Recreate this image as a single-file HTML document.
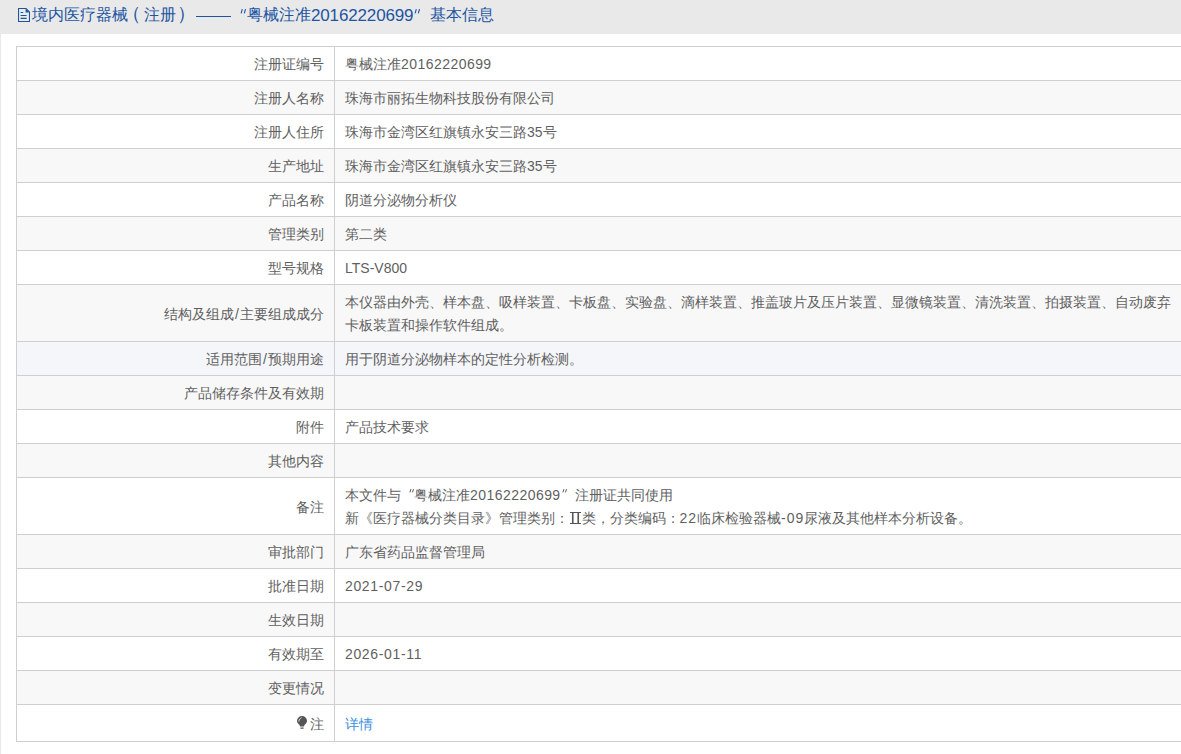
<!DOCTYPE html>
<html><head><meta charset="utf-8">
<style>
html,body{margin:0;padding:0;}
body{width:1181px;height:754px;overflow:hidden;background:#e9e9e9;font-family:"Liberation Sans",sans-serif;font-size:14px;color:#555;position:relative;}
.hd{position:absolute;left:0;top:0;width:1181px;height:34px;background:#e9e9e9;}
.hd .t{position:absolute;left:31px;top:4px;font-size:16px;line-height:22px;color:#1d55a2;white-space:nowrap;}
.ico{position:absolute;left:18px;top:8px;}
.panel{position:absolute;left:1px;top:34px;width:1200px;height:730px;background:#fff;}
.hl{position:absolute;left:0;top:33px;width:1181px;height:1px;background:#e6e8ec;}
table{position:absolute;left:16px;top:46px;border-collapse:collapse;width:1200px;table-layout:fixed;}
td{border:1px solid #cfcfcf;height:32px;padding:1px 0 0 0;font-size:14px;line-height:23px;color:#5f5f5f;white-space:nowrap;}
td.k{width:307px;text-align:right;padding-right:10px;}
td.v{padding-left:10px;}
tr.g td{background:#f8f8f8;}
tr.h td{background:#f5f6f9;}
.n{letter-spacing:0.45px;}
.dt{letter-spacing:0.65px;}
.sl{margin:0 1.2px;}
.r2{display:inline-block;width:12.5px;height:14px;position:relative;vertical-align:-1px;}
.r2 svg{position:absolute;left:1px;top:2px;}
.bulb{vertical-align:0px;margin-right:3px;}
.qo{display:inline-block;width:13px;height:10px;position:relative;}
.qo svg{position:absolute;left:8px;top:-1px;}
.qc{display:inline-block;width:14px;height:10px;position:relative;}
.qc svg{position:absolute;left:1.5px;top:-1px;}
tr.d td{height:54px;padding-top:2px;}
tr.l td{height:33px;padding-top:3px;}
</style></head><body>
<div class="hd">
<svg class="ico" width="12" height="14" viewBox="0 0 12 14"><path d="M0.5 0.5H8L11.5 4V13.5H0.5Z" fill="none" stroke="#1d55a2" stroke-width="1.1"/><path d="M7.6 0.8V4.4H11.2Z" fill="#1d55a2"/><path d="M2.6 4.5H5.2M2.6 7.5H8.6M2.6 10.4H8.6" stroke="#1d55a2" stroke-width="1.1"/></svg>
<span class="t" style="left:32px">境内医疗器械</span>
<span class="t" style="left:122px;top:3px;font-size:19px">（</span>
<span class="t" style="left:144px">注册</span>
<span class="t" style="left:177px;top:3px;font-size:19px">）</span>
<div style="position:absolute;left:196px;top:16px;width:35px;height:1.3px;background:#1d55a2"></div>
<svg style="position:absolute;left:240px;top:9px" width="6" height="4.5" viewBox="0 0 6 4.5"><path d="M2.3 0.2L1.1 4.3M5.5 0.2L4.3 4.3" stroke="#1d55a2" stroke-width="1.1"/></svg>
<span class="t" style="left:247px">粤械注准</span>
<span class="t" style="left:311px;top:5px;font-size:17px;letter-spacing:-0.15px">20162220699</span>
<svg style="position:absolute;left:414px;top:9px" width="6" height="4.5" viewBox="0 0 6 4.5"><path d="M2.3 0.2L1.1 4.3M5.5 0.2L4.3 4.3" stroke="#1d55a2" stroke-width="1.1"/></svg>
<span class="t" style="left:430px">基本信息</span>
</div>
<div class="hl"></div><div class="panel"></div>
<table>
<tr><td class="k">注册证编号</td><td class="v">粤械注准<span class="n">20162220699</span></td></tr>
<tr class="g"><td class="k">注册人名称</td><td class="v">珠海市丽拓生物科技股份有限公司</td></tr>
<tr><td class="k">注册人住所</td><td class="v">珠海市金湾区红旗镇永安三路35号</td></tr>
<tr class="g"><td class="k">生产地址</td><td class="v">珠海市金湾区红旗镇永安三路35号</td></tr>
<tr><td class="k">产品名称</td><td class="v">阴道分泌物分析仪</td></tr>
<tr class="g"><td class="k">管理类别</td><td class="v">第二类</td></tr>
<tr><td class="k">型号规格</td><td class="v">LTS-V800</td></tr>
<tr class="g d"><td class="k">结构及组成<span class="sl">/</span>主要组成成分</td><td class="v">本仪器由外壳、样本盘、吸样装置、卡板盘、实验盘、滴样装置、推盖玻片及压片装置、显微镜装置、清洗装置、拍摄装置、自动废弃<br>卡板装置和操作软件组成。</td></tr>
<tr class="h"><td class="k">适用范围<span class="sl">/</span>预期用途</td><td class="v">用于阴道分泌物样本的定性分析检测。</td></tr>
<tr class="g"><td class="k">产品储存条件及有效期</td><td class="v"></td></tr>
<tr><td class="k">附件</td><td class="v">产品技术要求</td></tr>
<tr class="g"><td class="k">其他内容</td><td class="v"></td></tr>
<tr class="d"><td class="k">备注</td><td class="v">本文件与<span class="qo"><svg width="5" height="3.6" viewBox="0 0 5 3.6"><path d="M1.9 0.2L0.9 3.4M4.5 0.2L3.5 3.4" stroke="#555" stroke-width="1"/></svg></span>粤械注准<span class="n">20162220699</span><span class="qc"><svg width="5" height="3.6" viewBox="0 0 5 3.6"><path d="M1.9 0.2L0.9 3.4M4.5 0.2L3.5 3.4" stroke="#555" stroke-width="1"/></svg></span>注册证共同使用<br>新《医疗器械分类目录》管理类别：<span class="r2"><svg width="11" height="12" viewBox="0 0 11 12"><path d="M0 0.5H11M0 11.5H11" stroke="#555" stroke-width="1"/><path d="M2.75 0.5V11.5M8.25 0.5V11.5" stroke="#555" stroke-width="1.6"/></svg></span>类，分类编码：<span style="letter-spacing:1px">22</span>临床检验器械<span style="letter-spacing:1px">-09</span>尿液及其他样本分析设备。</td></tr>
<tr class="g"><td class="k">审批部门</td><td class="v">广东省药品监督管理局</td></tr>
<tr><td class="k">批准日期</td><td class="v"><span class="dt">2021-07-29</span></td></tr>
<tr class="g"><td class="k">生效日期</td><td class="v"></td></tr>
<tr><td class="k">有效期至</td><td class="v"><span class="dt">2026-01-11</span></td></tr>
<tr class="g"><td class="k">变更情况</td><td class="v"></td></tr>
<tr class="l"><td class="k"><svg class="bulb" width="10" height="13" viewBox="0 0 10 13"><path d="M5 0A5 5 0 0 1 10 5C10 6.6 9 7.6 7.6 8.8L6.9 10.6H3.1L2.4 8.8C1 7.6 0 6.6 0 5A5 5 0 0 1 5 0Z" fill="#555"/><rect x="3.2" y="11.4" width="3.6" height="1.3" rx="0.65" fill="#555"/><path d="M1.9 5.6C1.9 3.6 3 2.2 4.6 1.8" fill="none" stroke="#fff" stroke-width="1" opacity="0.8"/></svg>注</td><td class="v"><span style="color:#3b8ee0">详情</span></td></tr>
</table>
</body></html>
